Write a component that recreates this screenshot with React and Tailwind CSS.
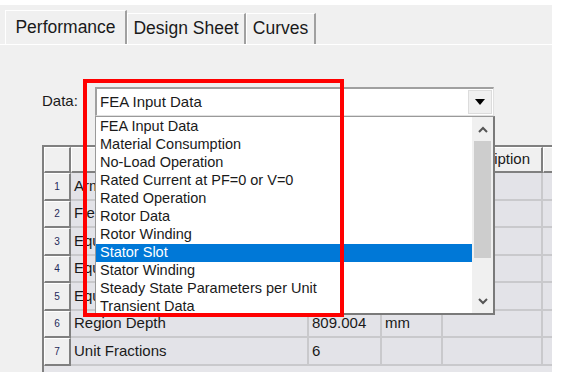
import React from 'react';

const options = [
  'FEA Input Data',
  'Material Consumption',
  'No-Load Operation',
  'Rated Current at PF=0 or V=0',
  'Rated Operation',
  'Rotor Data',
  'Rotor Winding',
  'Stator Slot',
  'Stator Winding',
  'Steady State Parameters per Unit',
  'Transient Data',
];

const rows = [
  ['Armature Winding Factor', '', ''],
  ['Field Winding Factor', '', ''],
  ['Equivalent Model Depth', '', ''],
  ['Equivalent Stator Length', '', ''],
  ['Equivalent Rotor Length', '', ''],
  ['Region Depth', '809.004', 'mm'],
  ['Unit Fractions', '6', ''],
];

const Tab = ({ label, active, w }) => (
  <div
    className={
      active
        ? `${w} h-[34px] pt-[3px] text-center bg-[#f0f0f0] border-l border-t border-white border-r-2 border-r-[#a0a0a0] text-[#1a1a1a]`
        : `${w} h-[31px] pt-[1px] text-center bg-[#f0f0f0] border-l border-t border-white border-r-2 border-r-[#a0a0a0] text-[#1a1a1a]`
    }
  >
    {label}
  </div>
);

const RowNum = ({ n, h }) => (
  <div
    className={`w-[27px] ${h} shrink-0 bg-[#f0f0f0] border-t border-l border-white border-r-2 border-b-2 border-r-[#808080] border-b-[#808080] flex items-center justify-center text-[10px] text-[#1f2a5a]`}
  >
    {n}
  </div>
);

const Cell = ({ w, children }) => (
  <div className={`${w} shrink-0 h-full bg-[#e3e3e8] border-r-2 border-b-2 border-[#c9c9cc] pl-[3px] flex items-center truncate`}>
    {children}
  </div>
);

export default function App() {
  return (
    <div
      className="relative w-[562px] h-[383px] bg-white overflow-hidden text-[15px] text-[#1a1a1a]"
      style={{ fontFamily: '"Liberation Sans", Arial, sans-serif' }}
    >
      <div className="mt-[5px] w-[552px] h-[367px] bg-[#f0f0f0] flex flex-col">
        {/* tabs */}
        <div className="h-[39px] pl-[5px] flex items-end text-[17.5px]">
          <Tab label="Performance" w="w-[122px]" active />
          <Tab label="Design Sheet" w="w-[119px]" />
          <Tab label="Curves" w="w-[70px]" />
        </div>
        <div className="flex-1 border-t border-white flex flex-col">
          {/* data selector */}
          <div className="mt-[42px] h-[29px] flex items-center">
            <span className="ml-[42px] w-[53px]">Data:</span>
            <div className="w-[399px] h-[29px] bg-white border-t-2 border-l-2 border-[#a0a0a0] border-r border-b border-r-[#e0e0e0] border-b-[#e0e0e0] flex items-center justify-between">
              <span className="pl-[3px]">FEA Input Data</span>
              <div className="w-[24px] h-[24px] mr-[1px] bg-[#f0f0f0] border border-[#dcdcdc] flex items-center justify-center">
                <svg width="10" height="6" viewBox="0 0 10 6"><path d="M0 0h10L5 6z" fill="#000" /></svg>
              </div>
            </div>
          </div>

          {/* table */}
          <div className="mt-[29px] ml-[42px] flex-1 bg-[#e6e6ea] border-l-2 border-t-2 border-[#808080] overflow-hidden">
            <div className="flex h-[26px]">
              <RowNum n="" h="h-[26px]" />
              {[
                ['w-[238px]', 'Name'],
                ['w-[73px]', 'Value'],
                ['w-[61px]', 'Unit'],
                ['w-[100px]', 'Description'],
                ['w-[40px]', ''],
              ].map(([w, t], i) => (
                <div
                  key={i}
                  className={`${w} shrink-0 h-full bg-[#f0f0f0] border-t border-l border-white border-r-2 border-b-2 border-r-[#808080] border-b-[#808080] flex items-center justify-center`}
                >
                  {t}
                </div>
              ))}
            </div>
            {rows.map(([name, val, unit], i) => (
              <div key={i} className="flex h-[27.5px]">
                <RowNum n={i + 1} h="h-[27.5px]" />
                <Cell w="w-[238px]">{name}</Cell>
                <Cell w="w-[73px]">{val}</Cell>
                <Cell w="w-[61px]">{unit}</Cell>
                <Cell w="w-[100px]"></Cell>
                <Cell w="w-[40px]"></Cell>
              </div>
            ))}
          </div>
        </div>
      </div>

      {/* open dropdown list */}
      <div className="absolute left-[95px] top-[116px] w-[400px] h-[199px] bg-white border border-[#9a9a9a] border-r-2 border-b-2 border-r-[#7a7a7a] border-b-[#7a7a7a] flex text-[14.5px]">
        <div className="flex-1 flex flex-col pt-[1px]">
          {options.map((o) => (
            <div
              key={o}
              className={
                o === 'Stator Slot'
                  ? 'h-[18px] pl-[4px] flex items-center bg-[#0078d7] text-white'
                  : 'h-[18px] pl-[4px] flex items-center'
              }
            >
              {o}
            </div>
          ))}
        </div>
        <div className="w-[21px] bg-[#f0f0f0] flex flex-col items-center">
          <div className="h-[24px] flex items-center justify-center">
            <svg width="10" height="7" viewBox="0 0 10 7"><path d="M1 6l4-4 4 4" stroke="#555" strokeWidth="2" fill="none" /></svg>
          </div>
          <div className="w-[17px] h-[117px] bg-[#cdcdcd]"></div>
          <div className="flex-1"></div>
          <div className="h-[24px] flex items-center justify-center">
            <svg width="10" height="7" viewBox="0 0 10 7"><path d="M1 1l4 4 4-4" stroke="#555" strokeWidth="2" fill="none" /></svg>
          </div>
        </div>
      </div>

      {/* red highlight box */}
      <div className="absolute left-[83px] top-[79px] w-[261px] h-[238px] border-4 border-[#ff0000] pointer-events-none"></div>
    </div>
  );
}
